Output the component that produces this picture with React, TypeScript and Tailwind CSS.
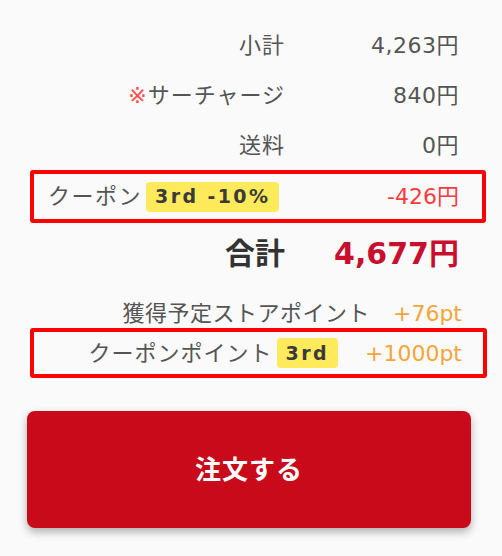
import React from "react";

const jp = "font-['DejaVu_Sans','Noto_Sans_CJK_JP',sans-serif]";

function Row({ label, value }: { label: React.ReactNode; value: string }) {
  return (
    <div className="flex h-[50px] items-center justify-end pr-[43px]">
      <span className="text-[22px] tracking-[1px] text-[#555]">{label}</span>
      <span className="w-[174px] text-right text-[22px] tracking-[0.5px] text-[#555]">{value}</span>
    </div>
  );
}

function Badge({ children }: { children: string }) {
  return (
    <span className="ml-[4px] inline-flex h-[30px] items-center rounded-[4px] bg-[#ffea5c] pl-[9px] pr-[9px] font-['DejaVu_Sans',sans-serif] text-[19px] font-bold tracking-[2.4px] text-[#3a3a3a]">
      {children}
    </span>
  );
}

export default function App() {
  return (
    <div className={`min-h-[556px] w-[502px] bg-[#fafafa] pt-[20px] ${jp}`}>
      <Row label="小計" value="4,263円" />
      <Row
        label={
          <>
            <span className="text-[#ff4d4d]">※</span>サーチャージ
          </>
        }
        value="840円"
      />
      <Row label="送料" value="0円" />

      {/* coupon discount */}
      <div className="ml-[30px] mr-[16px] flex h-[53px] items-center rounded-[3px] border-[4px] border-[#ff0000] pl-[14px] pr-[23px]">
        <span className="text-[22px] tracking-[1.5px] text-[#555]">クーポン</span>
        <Badge>3rd -10%</Badge>
        <span className="ml-auto text-[22px] text-[#ff3b3b]">-426円</span>
      </div>

      <div className="flex h-[60px] items-center justify-end pr-[43px]">
        <span className="text-[30px] font-bold text-[#333]">合計</span>
        <span className="w-[174px] text-right text-[30px] font-bold text-[#c8102e]">4,677円</span>
      </div>

      {/* points */}
      <div className="mt-[15px] flex h-[30px] items-center justify-end gap-[23px] pr-[40px]">
        <span className="text-[22px] tracking-[0.5px] text-[#555]">獲得予定ストアポイント</span>
        <span className="text-[22px] text-[#f5a53a]">+76pt</span>
      </div>
      <div className="ml-[30px] mr-[15px] flex h-[50px] items-center justify-end rounded-[3px] border-[4px] border-[#ff0000] pr-[21px]">
        <span className="text-[22px] tracking-[1px] text-[#555]">クーポンポイント</span>
        <Badge>3rd</Badge>
        <span className="ml-[27px] text-[22px] text-[#f5a53a]">+1000pt</span>
      </div>

      <button className="ml-[27px] mt-[33px] flex h-[117px] w-[444px] items-center justify-center rounded-[8px] bg-[#c80a1a] shadow-[0_4px_8px_rgba(0,0,0,0.3)]">
        <span className="-mt-[4px] font-['Noto_Sans_CJK_JP',sans-serif] text-[26px] font-bold tracking-[1px] text-white">注文する</span>
      </button>
    </div>
  );
}
